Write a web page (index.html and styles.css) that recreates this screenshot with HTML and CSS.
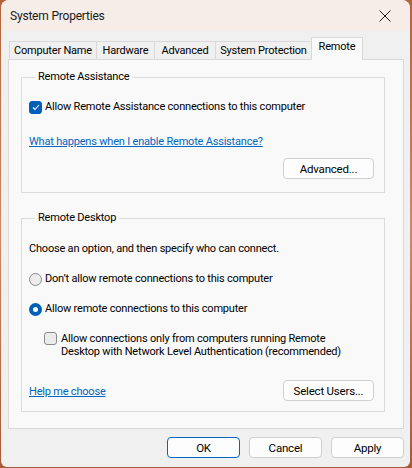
FILE: index.html
```html
<!DOCTYPE html>
<html lang="en">
<head>
    <meta charset="UTF-8">
    <title>System Properties</title>
    <link rel="stylesheet" href="styles.css">
</head>
<body>
    <div class="window">
        <div class="titlebar">
            <span class="title">System Properties</span>
            <svg class="close" width="12" height="12" viewBox="0 0 12 12">
                <path d="M0.5 0.5 L11.5 11.5 M11.5 0.5 L0.5 11.5" stroke="#1a1a1a" stroke-width="1" fill="none"/>
            </svg>
        </div>

        <div class="content">
            <div class="tabs">
                <div class="tab tab-name">Computer Name</div>
                <div class="tab tab-hardware">Hardware</div>
                <div class="tab tab-advanced">Advanced</div>
                <div class="tab tab-protection">System Protection</div>
                <div class="tab tab-remote selected">Remote</div>
            </div>

            <div class="panel">
                <fieldset class="group group-assist">
                    <legend>Remote Assistance</legend>
                    <div class="option">
                        <span class="check checked">
                            <svg width="8" height="7" viewBox="0 0 8 7"><path d="M1 3.5 L3 5.5 L7 1" stroke="#fff" stroke-width="1.1" fill="none"/></svg>
                        </span>
                        <span>Allow Remote Assistance connections to this computer</span>
                    </div>
                    <a class="link link-assist" href="#">What happens when I enable Remote Assistance?</a>
                    <div class="button-row row-advanced">
                        <button class="btn">Advanced...</button>
                    </div>
                </fieldset>

                <fieldset class="group group-desktop">
                    <legend>Remote Desktop</legend>
                    <p class="intro">Choose an option, and then specify who can connect.</p>
                    <div class="option">
                        <span class="radio"></span>
                        <span>Don’t allow remote connections to this computer</span>
                    </div>
                    <div class="option option-second">
                        <span class="radio selected"></span>
                        <span>Allow remote connections to this computer</span>
                    </div>
                    <div class="option option-nla">
                        <span class="check"></span>
                        <span>Allow connections only from computers running Remote<br>Desktop with Network Level Authentication (recommended)</span>
                    </div>
                    <div class="button-row row-help">
                        <a class="link" href="#">Help me choose</a>
                        <button class="btn">Select Users...</button>
                    </div>
                </fieldset>
            </div>

            <div class="footer">
                <button class="btn btn-default">OK</button>
                <button class="btn">Cancel</button>
                <button class="btn">Apply</button>
            </div>
        </div>
    </div>
</body>
</html>
```

FILE: styles.css
```css
* {
    margin: 0;
    padding: 0;
    box-sizing: border-box;
}

html, body {
    width: 100%;
    height: 100%;
    overflow: hidden;
}

body {
    background: linear-gradient(180deg, #b0643a 0%, #c88a66 50%, #a65a36 100%);
    font-family: "Roboto", "Liberation Sans", sans-serif;
    font-size: 11px;
    letter-spacing: -0.2px;
    color: #000;
}

.window {
    margin-left: 1px;
    width: 409px;
    height: 467px;
    background: #f0f0f0;
    border-radius: 8px 8px 6px 6px;
    overflow: hidden;
}

.titlebar {
    height: 31px;
    background: #f6ece8;
    display: flex;
    align-items: center;
    justify-content: space-between;
    padding: 0 19px 0 9px;
}

.title {
    font-size: 12px;
    color: #1a1a1a;
}

.content {
    padding: 6px 6px 0 7px;
}

.tabs {
    display: flex;
    align-items: flex-end;
    height: 22px;
    padding-left: 1px;
    position: relative;
    z-index: 1;
}

.tab {
    height: 18px;
    line-height: 17px;
    border: 1px solid #d9d9d9;
    border-bottom: none;
    margin-right: -1px;
    background: #f0f0f0;
    color: #000;
    text-align: center;
    white-space: nowrap;
}

.tab-name { width: 88px; }
.tab-hardware { width: 59px; }
.tab-advanced { width: 62px; }
.tab-protection { width: 97px; }
.tab-remote { width: 52px; }

.tab.selected {
    height: 23px;
    line-height: 17px;
    margin-bottom: -1px;
    background: #f9f9f9;
}

.panel {
    height: 370px;
    background: #f9f9f9;
    border: 1px solid #d9d9d9;
    padding: 10px 18px 0 12px;
}

.group {
    border: 1px solid #dcdcdc;
    padding: 0 10px 0 7px;
    min-width: 0;
}

.group legend {
    margin-left: 6px;
    padding: 0 3px;
    line-height: 14px;
    color: #000;
}

.group-assist {
    height: 123px;
}

.group-desktop {
    margin-top: 18px;
    height: 201px;
}

.option {
    display: flex;
    align-items: center;
    gap: 3px;
    line-height: 14px;
}

.group-assist .option {
    margin-top: 16px;
}

.check {
    flex: none;
    width: 13px;
    height: 13px;
    border: 1px solid #8a8a8a;
    border-radius: 3px;
    background: #ececec;
    display: flex;
    align-items: center;
    justify-content: center;
}

.check.checked {
    background: #005fb8;
    border-color: #005fb8;
}

.radio {
    flex: none;
    width: 13px;
    height: 13px;
    border: 1px solid #8a8a8a;
    border-radius: 50%;
    background: #ececec;
}

.radio.selected {
    border: 4px solid #005fb8;
    background: #fff;
}

.link {
    display: block;
    color: #0067c0;
    text-decoration: underline;
    line-height: 14px;
}

.link-assist {
    margin-top: 21px;
}

.button-row {
    display: flex;
    justify-content: flex-end;
    align-items: center;
}

.row-advanced {
    margin-top: 9px;
}

.btn {
    width: 91px;
    height: 21px;
    background: #fdfdfd;
    border: 1px solid #d0d0d0;
    border-radius: 4px;
    font-family: inherit;
    font-size: 11.5px;
    letter-spacing: -0.2px;
    color: #000;
}

.intro {
    margin-top: 17px;
    line-height: 14px;
}

.group-desktop .option {
    margin-top: 16px;
}

.group-desktop .option-second {
    margin-top: 16px;
}

.group-desktop .option-nla {
    margin-top: 16px;
    padding-left: 15px;
    gap: 4px;
    align-items: flex-start;
    line-height: 13px;
}

.row-help {
    justify-content: space-between;
    margin-top: 22px;
}

.row-help .link {
    display: inline;
    margin-top: 3px;
}

.footer {
    display: flex;
    justify-content: flex-end;
    gap: 9px;
    padding: 8px 0 0 0;
}

.footer .btn {
    width: 73px;
}

.btn-default {
    border-color: #0067c0;
}
```
